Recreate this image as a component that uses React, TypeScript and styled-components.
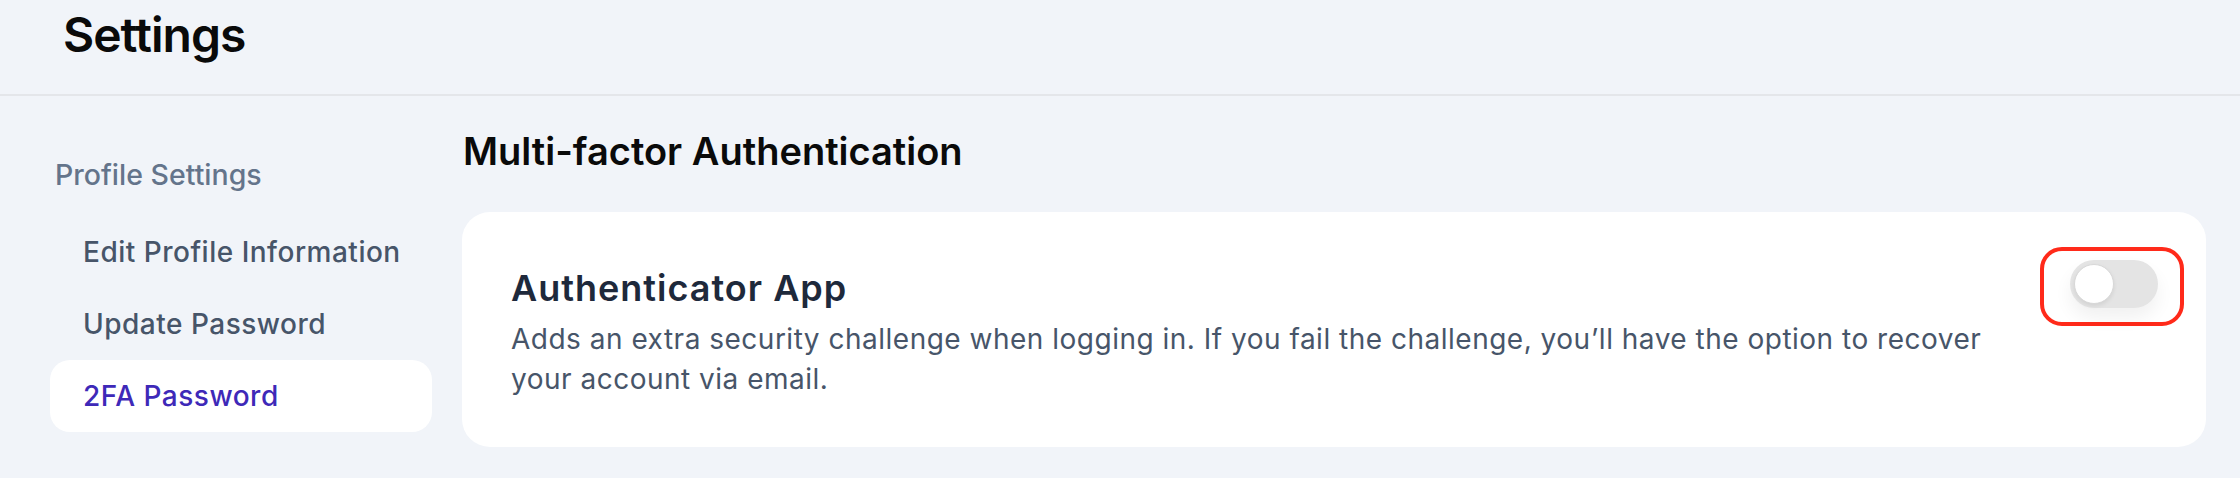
import React from "react";
import styled, { createGlobalStyle } from "styled-components";

const Global = createGlobalStyle`
  html, body { margin: 0; padding: 0; }
  body {
    background: #f1f4f9;
    font-family: Inter, "Noto Sans", sans-serif;
    width: 2240px;
    height: 478px;
    overflow: hidden;
  }
  * { box-sizing: border-box; }
`;

const Page = styled.div`
  width: 2240px;
  height: 478px;
  display: flex;
  flex-direction: column;
  background: #f1f4f9;
`;

const Header = styled.header`
  height: 96px;
  border-bottom: 2px solid #e4e6ea;
  padding: 6px 0 0 63px;
`;

const Title = styled.h1`
  margin: 0;
  font-size: 48px;
  line-height: 58px;
  font-weight: 600;
  letter-spacing: -1px;
  color: #0a0a0a;
`;

const Body = styled.div`
  display: flex;
  flex: 1;
`;

const Sidebar = styled.nav`
  width: 462px;
  padding: 55px 0 0 50px;
  display: flex;
  flex-direction: column;
`;

const SideHeading = styled.div`
  font-size: 28.5px;
  line-height: 48px;
  font-weight: 500;
  color: #64748b;
  padding-left: 5px;
  margin-bottom: 17px;
`;

const NavItem = styled.div<{ $active?: boolean }>`
  width: 382px;
  height: 72px;
  display: flex;
  align-items: center;
  padding-left: 33px;
  border-radius: 20px;
  font-size: 28px;
  font-weight: 500;
  letter-spacing: 0.5px;
  background: ${(p) => (p.$active ? "#ffffff" : "transparent")};
  color: ${(p) => (p.$active ? "#3e29b8" : "#475569")};
`;

const Main = styled.main`
  flex: 1;
  padding: 27px 34px 0 0;
  display: flex;
  flex-direction: column;
`;

const SectionTitle = styled.h2`
  margin: 0 0 33px 1px;
  font-size: 38px;
  line-height: 56px;
  font-weight: 600;
  color: #0a0a0a;
`;

const Card = styled.section`
  background: #ffffff;
  border-radius: 28px;
  height: 235px;
  display: flex;
  justify-content: space-between;
  align-items: flex-start;
  padding: 35px 22px 0 49px;
`;

const CardText = styled.div`
  padding-top: 13px;
  display: flex;
  flex-direction: column;
  gap: 3px;
`;

const CardTitle = styled.h3`
  margin: 0;
  font-size: 36px;
  line-height: 56px;
  font-weight: 600;
  letter-spacing: 1px;
  color: #1e293b;
`;

const CardDesc = styled.p`
  margin: 0;
  max-width: 1525px;
  font-size: 28px;
  line-height: 40px;
  font-weight: 400;
  letter-spacing: 0.5px;
  color: #475569;
`;

const FocusRing = styled.div`
  flex-shrink: 0;
  border: 4px solid #ff2a1a;
  border-radius: 22px;
  padding: 9px 22px 14px 26px;
`;

const Track = styled.button<{ $on?: boolean }>`
  width: 88px;
  height: 48px;
  border: none;
  border-radius: 24px;
  padding: 0 4px;
  display: flex;
  align-items: center;
  justify-content: ${(p) => (p.$on ? "flex-end" : "flex-start")};
  background: ${(p) => (p.$on ? "#3e29b8" : "#e4e4e4")};
  box-shadow: 0 10px 18px rgba(0, 0, 0, 0.06);
  cursor: pointer;
`;

const Knob = styled.span`
  width: 40px;
  height: 40px;
  border-radius: 50%;
  background: #ffffff;
  border: 1px solid #d8d8d8;
  box-shadow: 0 2px 4px rgba(0, 0, 0, 0.08);
`;

export default function App() {
  const [on, setOn] = React.useState(false);
  return (
    <>
      <Global />
      <Page>
        <Header>
          <Title>Settings</Title>
        </Header>
        <Body>
          <Sidebar>
            <SideHeading>Profile Settings</SideHeading>
            <NavItem>Edit Profile Information</NavItem>
            <NavItem>Update Password</NavItem>
            <NavItem $active>2FA Password</NavItem>
          </Sidebar>
          <Main>
            <SectionTitle>Multi-factor Authentication</SectionTitle>
            <Card>
              <CardText>
                <CardTitle>Authenticator App</CardTitle>
                <CardDesc>
                  Adds an extra security challenge when logging in. If you fail the challenge, you’ll have the option to recover your account via email.
                </CardDesc>
              </CardText>
              <FocusRing>
                <Track $on={on} onClick={() => setOn(!on)} aria-label="Toggle authenticator app">
                  <Knob />
                </Track>
              </FocusRing>
            </Card>
          </Main>
        </Body>
      </Page>
    </>
  );
}
